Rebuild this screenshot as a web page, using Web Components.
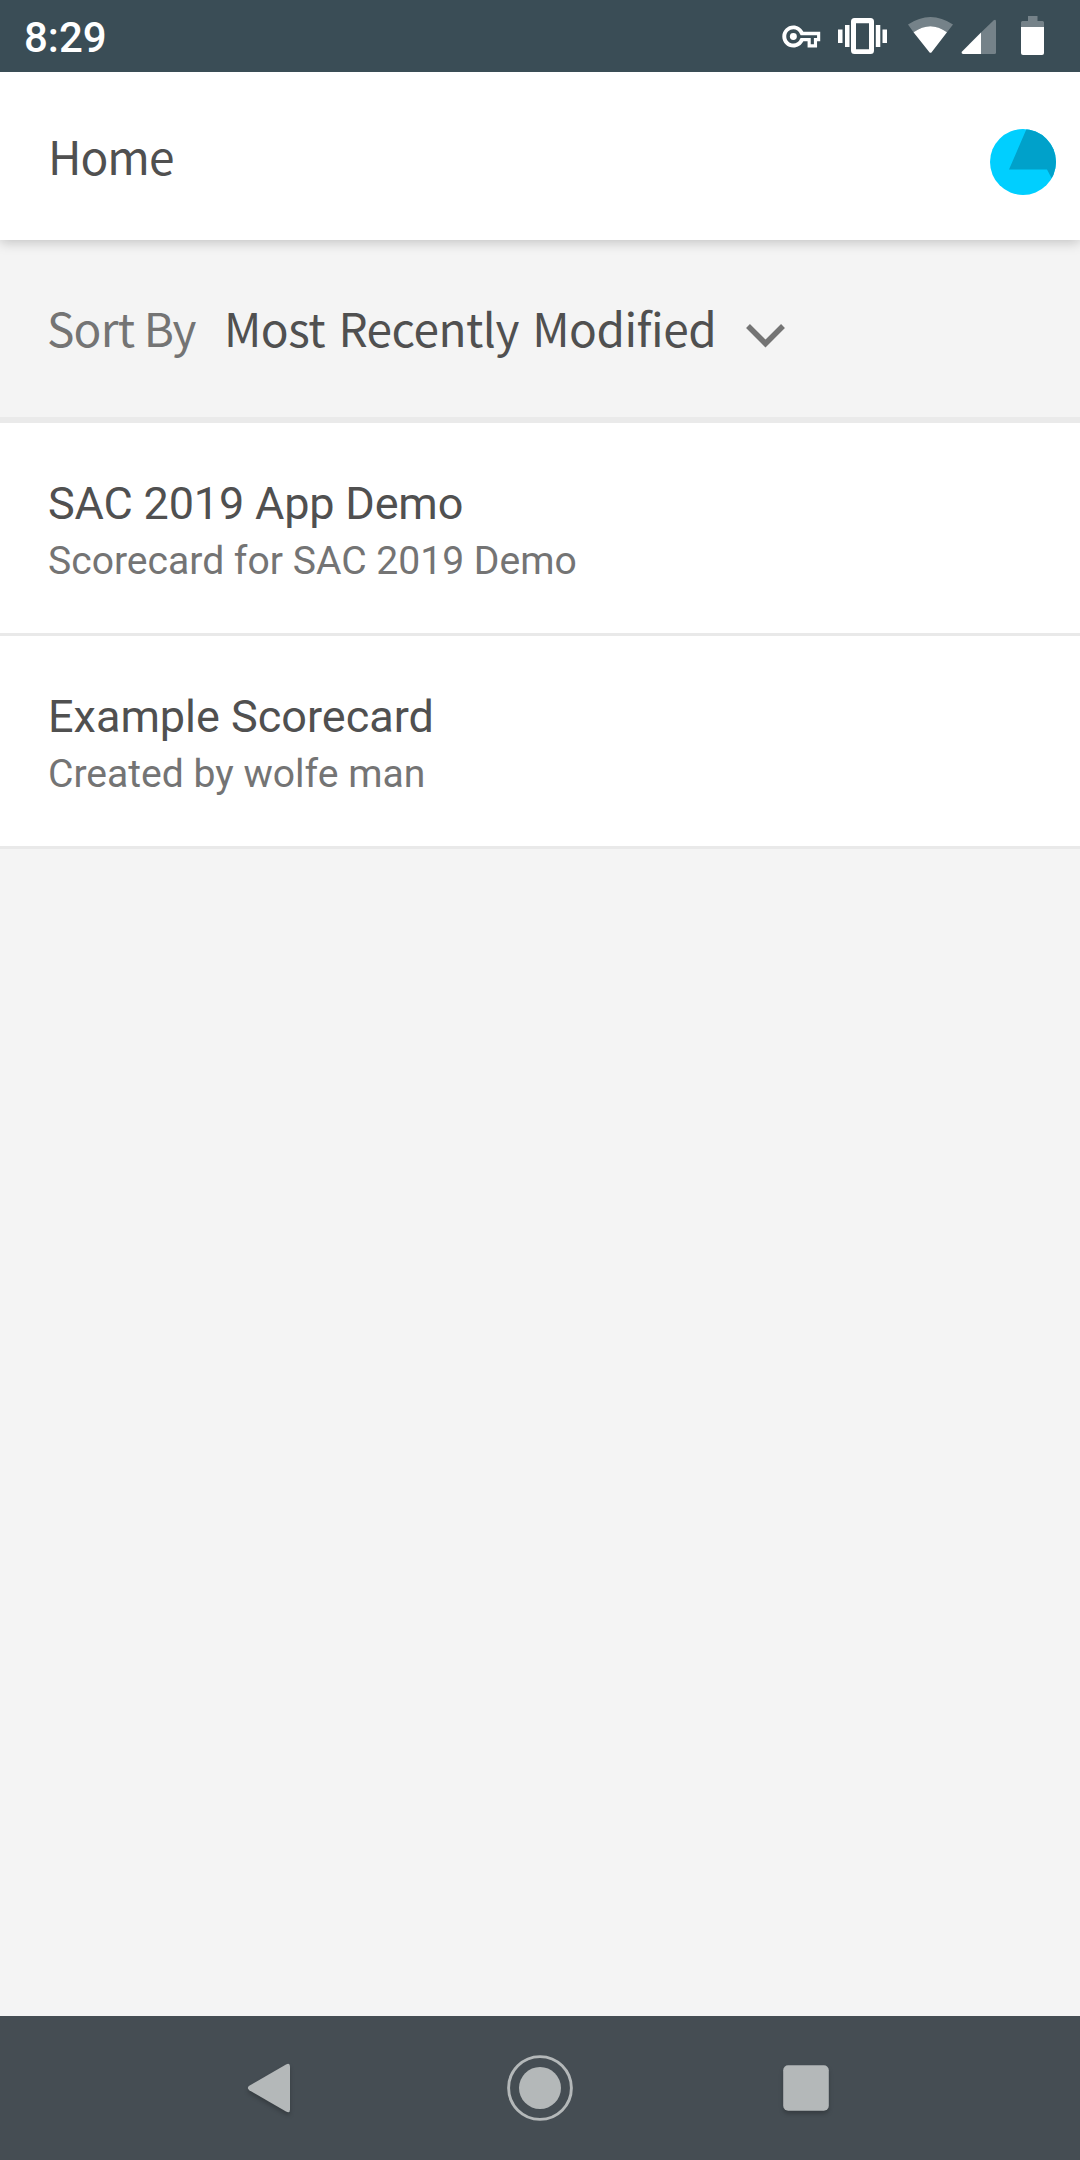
<!DOCTYPE html>
<html lang="en">
<head>
<meta charset="utf-8">
<title>Home</title>
<style>
html,body{margin:0;padding:0}
body{width:1080px;height:2160px;overflow:hidden;background:#f4f4f4;font-family:Roboto,sans-serif}
</style>
</head>
<body>
<score-app></score-app>
<script>
const define = (name, html) => customElements.define(name, class extends HTMLElement {
  constructor() {
    super();
    this.attachShadow({ mode: 'open' }).innerHTML = html;
  }
});

define('status-bar', `
<style>
:host{display:flex;align-items:center;justify-content:space-between;height:72px;background:#3a4d56;color:#fff;padding-left:24px;box-sizing:border-box;flex:none}
.time{font:500 42px/72px Roboto,sans-serif;height:72px;padding-top:2px;box-sizing:border-box}
svg{display:block}
</style>
<span class="time"><slot></slot></span>
<svg width="310" height="72" viewBox="0 0 310 72" fill="#fff">
  <g transform="translate(12.3 17.5) scale(1.58)"><path fill-rule="evenodd" d="M22 19h-6v-4h-2.680c-1.140 2.420-3.600 4-6.320 4-3.860 0-7-3.140-7-7s3.140-7 7-7c2.720 0 5.170 1.580 6.320 4H24v6h-2zM18 17h2v-4h2v-1.700H11.600l-.4-.9C10.500 8.600 8.900 7.500 7 7.500c-2.500 0-4.500 2-4.500 4.500s2 4.500 4.500 4.500c1.900 0 3.500-1.100 4.200-2.900l.4-.6H18z"/><circle cx="7" cy="12" r="2.200"/></g>
  <path fill-rule="evenodd" d="M84.500 18h16a3.500 3.500 0 0 1 3.500 3.500v29a3.500 3.500 0 0 1-3.500 3.500h-16a3.500 3.500 0 0 1-3.500-3.500v-29a3.500 3.500 0 0 1 3.500-3.500zM86 23.300v26h13v-26z"/>
  <path d="M68 29.500h4.500v13.500H68zM75 25h4.500v22H75zM105.800 25h4.500v22h-4.500zM112.500 29.500h4.500v13.500h-4.500z"/>
  <path opacity=".3" d="M138 24.500Q160.500 9.500 183 24.500L177 32.300Q160.500 20 143.500 32.300Z"/>
  <path d="M143.500 32.300Q160.500 20 177 32.300L161.800 52q-1.300 1.700-2.600 0Z"/>
  <path opacity=".3" d="M211 32.500L223.500 20.500Q226 18.500 226 21.500V52.500Q226 54 224.500 54H211Z"/>
  <path d="M211 32.500V54H193q-2.500-.8-.7-2.800Z"/>
  <path opacity=".3" d="M251 27v-4.500Q251 21 252.500 21H258v-5h9.500v5h5q1.500 0 1.500 1.500V27Z"/>
  <path d="M251 27h23v26q0 2-2 2h-19q-2 0-2-2Z"/>
</svg>`);

define('app-header', `
<style>
:host{display:flex;align-items:center;justify-content:space-between;height:168px;padding:0 24px 0 48px;box-sizing:border-box;background:#fff;box-shadow:0 2px 12px rgba(0,0,0,.22);clip-path:inset(0 0 -20px 0);position:relative;flex:none}
h1{margin:0 0 3px;font:400 46px/134px "Noto Sans CJK SC",sans-serif;color:#505050;letter-spacing:-1px}
svg{display:block;margin-top:12px}
</style>
<h1><slot></slot></h1>
<svg width="66" height="66" viewBox="0 0 66 66"><defs><clipPath id="c"><circle cx="33" cy="33" r="33"/></clipPath></defs><circle cx="33" cy="33" r="33" fill="#00cfff"/><path clip-path="url(#c)" fill="#00a1ca" d="M36.500 0L19 40.500H57L62 50H70V0Z"/></svg>`);

define('sort-bar', `
<style>
:host{display:flex;height:183px;border-bottom:6px solid #eaeaea;box-sizing:border-box;padding-left:47px;font:400 46px/174px "Noto Sans CJK SC",sans-serif;color:#747474;font-feature-settings:"liga" 0;white-space:nowrap;flex:none}
.label{width:177px;letter-spacing:-.8px}
.value{color:#505050;width:522px;letter-spacing:-.5px;word-spacing:3.500px}
svg{display:block;margin-top:83px}
</style>
<span class="label">Sort By</span><span class="value"><slot></slot></span>
<svg width="40" height="28" viewBox="0 0 40 28"><path d="M2 3L19.500 20.500L37 3" fill="none" stroke="#747474" stroke-width="5.500"/></svg>`);

define('score-card', `
<style>
:host{display:flex;flex-direction:column;height:213px;background:#fff;border-bottom:3px solid #e9e9e9;box-sizing:border-box;padding:50px 48px 0;flex:none;white-space:nowrap}
.t{font:400 45px/61px Roboto,sans-serif;color:#505050;letter-spacing:var(--title-spacing,0)}
.s{font:400 39.100px/54px Roboto,sans-serif;color:#747474}
</style>
<span class="t"><slot name="title"></slot></span><span class="s"><slot></slot></span>`);

define('nav-bar', `
<style>
:host{display:flex;height:144px;background:#454d53;flex:none;margin-top:auto;justify-content:center}
svg{display:block;filter:drop-shadow(0 3px 2px rgba(0,0,0,.22))}
.c{filter:none}
.wrap{display:flex;width:620px;justify-content:space-between;align-items:center}
</style>
<div class="wrap">
<svg width="80" height="80" viewBox="0 0 80 80"><path fill="#b4b8b9" d="M19.300 37.800L56 16.500q4-2.200 4 2V61.500q0 4.200-4 2L19.300 42.200q-3-2.200 0-4.400Z"/></svg>
<svg class="c" width="80" height="80" viewBox="0 0 80 80"><circle cx="40" cy="40" r="31.400" fill="none" stroke="#b4b8b9" stroke-width="2.900"/><circle cx="40" cy="40" r="21" fill="#b4b8b9"/></svg>
<svg width="80" height="80" viewBox="0 0 80 80"><rect x="13.200" y="17.200" width="45.600" height="45.600" rx="5" fill="#b4b8b9"/></svg>
</div>`);

define('score-app', `
<style>
:host{display:flex;flex-direction:column;width:1080px;height:2160px;background:#f4f4f4}
.tight{--title-spacing:-.18px}
</style>
<status-bar>8:29</status-bar>
<app-header>Home</app-header>
<sort-bar>Most Recently Modified</sort-bar>
<score-card class="tight"><span slot="title">SAC 2019 App Demo</span>Scorecard for SAC 2019 Demo</score-card>
<score-card><span slot="title">Example Scorecard</span>Created by wolfe man</score-card>
<nav-bar></nav-bar>`);
</script>
</body>
</html>
